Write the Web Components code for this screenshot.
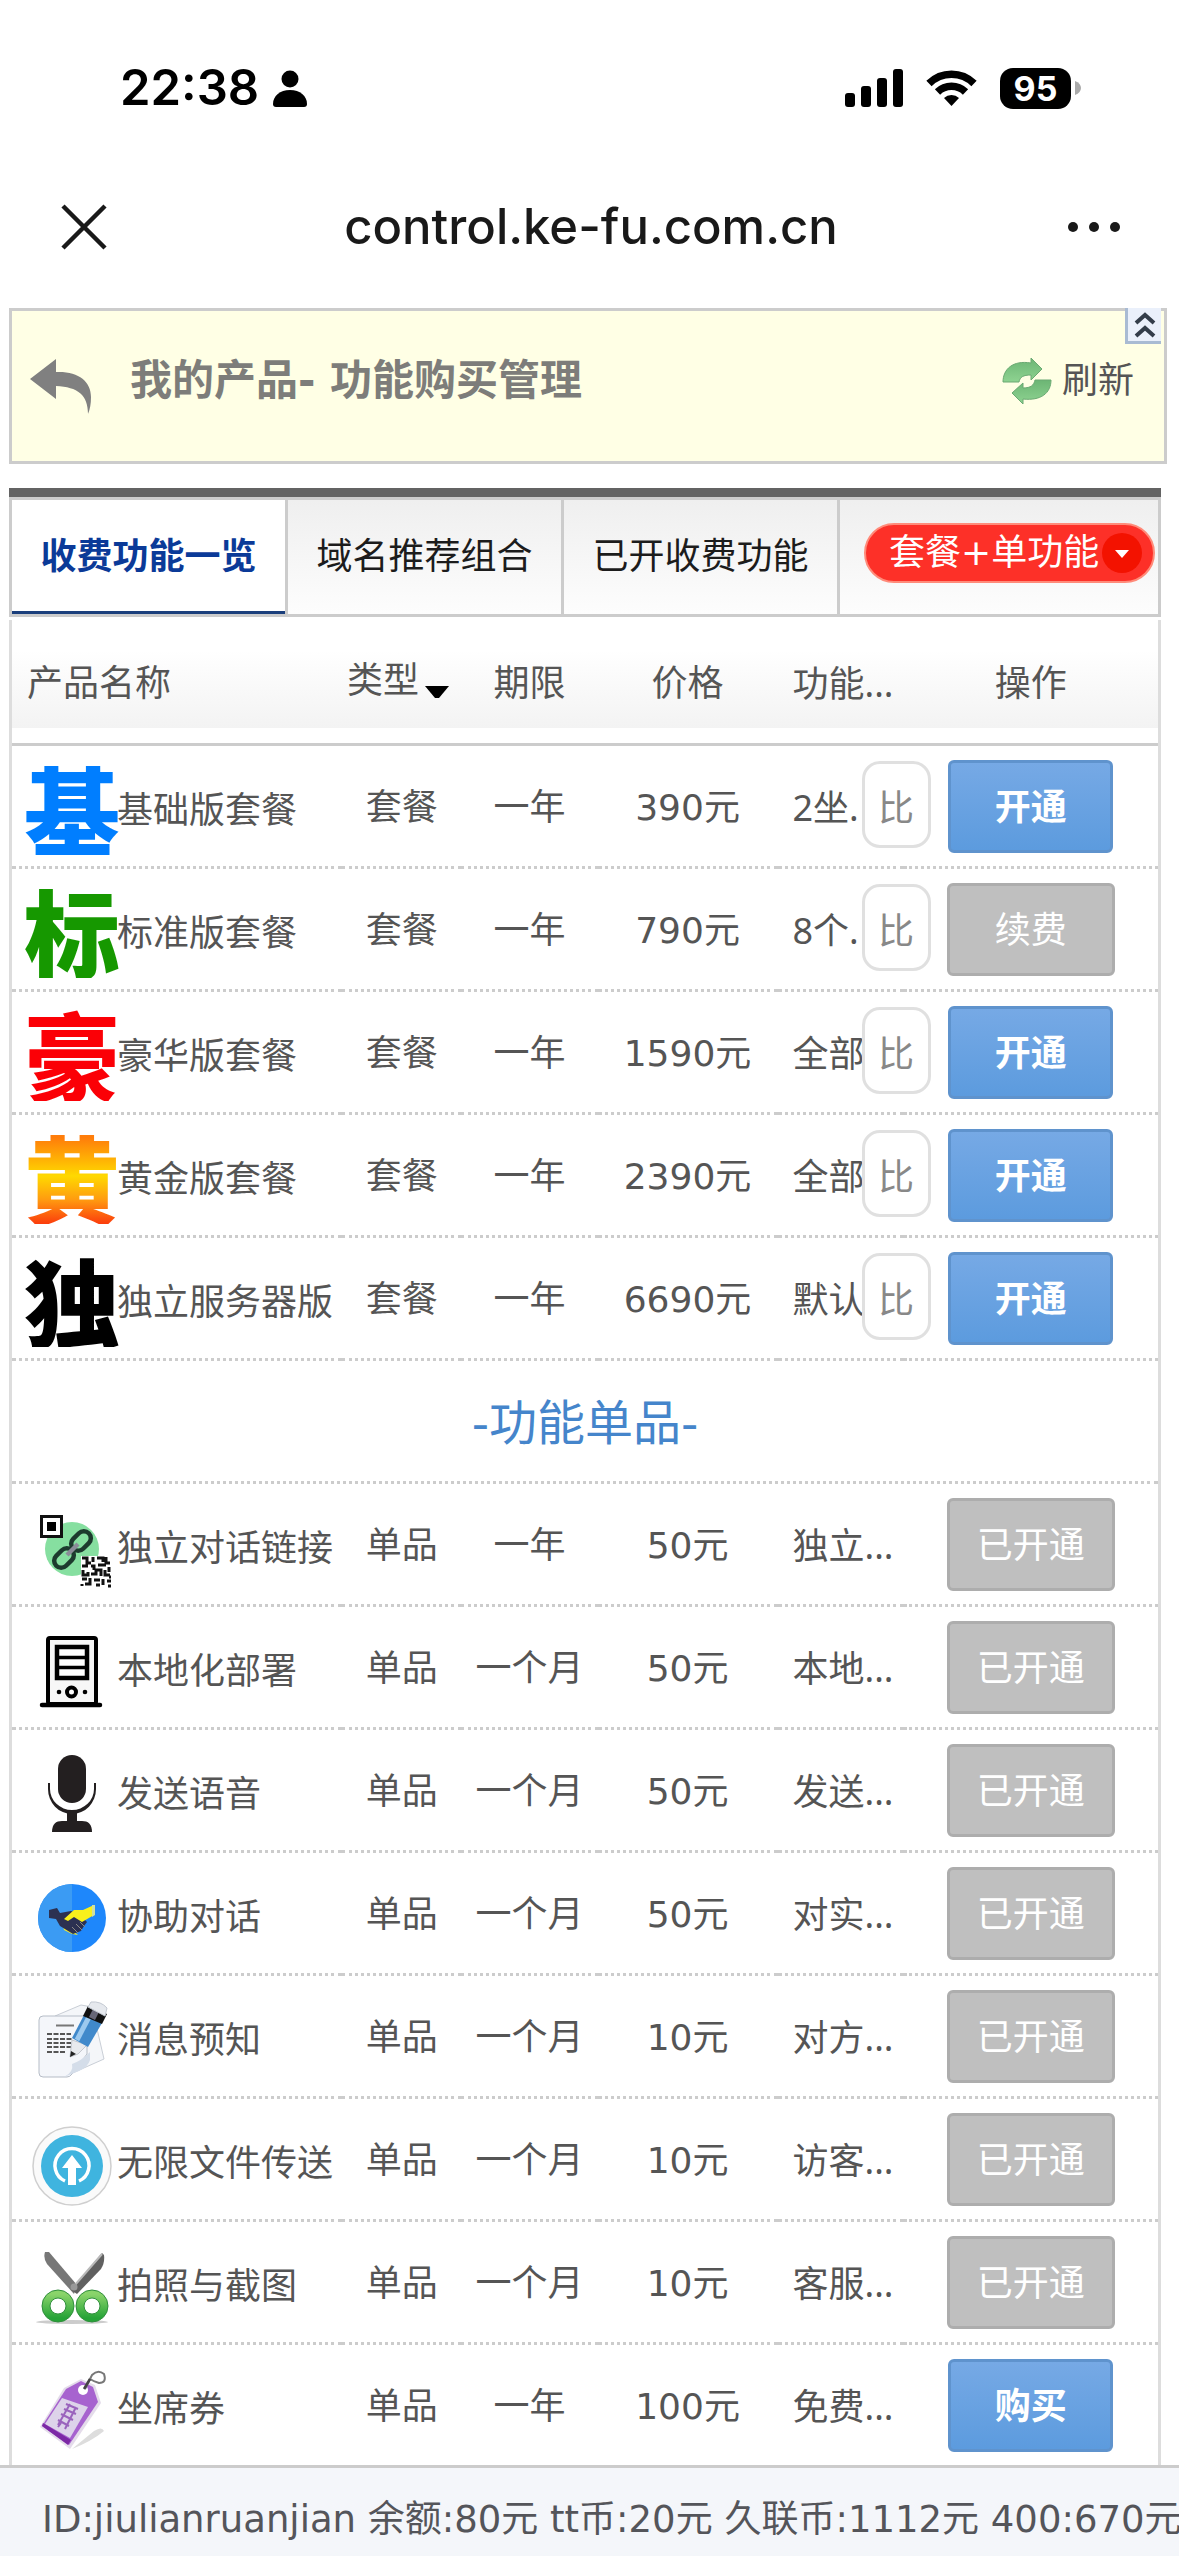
<!DOCTYPE html>
<html lang="zh-CN">
<head>
<meta charset="UTF-8">
<meta name="viewport" content="width=device-width, initial-scale=1">
<title>功能购买管理</title>
<style>
    body{
        margin: 0;
        background: #fff;
        color: #555;
        font-family: "DejaVu Sans", "Noto Sans CJK SC", sans-serif;
        font-size: 36px;
        line-height: 48px;
    }
</style>
</head>
<body>
<kf-app>
    <kf-status slot="top" hora="22:38" bateria="95"></kf-status>
    <kf-navbar slot="top">control.ke-fu.com.cn</kf-navbar>
    <kf-banner>我的产品- 功能购买管理</kf-banner>
    <kf-tabs></kf-tabs>
    <kf-products></kf-products>
    <kf-account slot="bottom">ID:jiulianruanjian 余额:80元 tt币:20元 久联币:1112元 400:670元</kf-account>
</kf-app>

<script>
// page frame: fixed head and foot, scrolling middle
class KF_app extends HTMLElement{
    constructor(){
        super();
        this.attachShadow({ mode: "open" });
    }
    connectedCallback(){
        this.shadowRoot.innerHTML = `
        <style>
        :host{
            display: flex;
            flex-direction: column;
            height: 100vh;
        }
        main{
            flex: 1;
            min-height: 0;
            overflow: hidden auto;
            scrollbar-width: none;
            padding: 8px 18px 0 9px;
        }
        </style>
        <slot name="top"></slot>
        <main><slot></slot></main>
        <slot name="bottom"></slot>
        `;
    }
}
window.customElements.define("kf-app", KF_app);

class KF_status extends HTMLElement{
    constructor(){
        super();
        this.hora;
        this.bateria;
        this.attachShadow({ mode: "open" });
    }
    static get observedAttributes(){
        return ['hora','bateria'];
    }
    attributeChangedCallback(nameAtr, oldValue, newValue){
        switch (nameAtr) {
            case "hora":
                this.hora = newValue;
                break;
            case "bateria":
                this.bateria = newValue;
                break;
        }
    }
    connectedCallback(){
        this.shadowRoot.innerHTML = `
        <style>
        :host{
            display: flex;
            align-items: center;
            justify-content: space-between;
            padding: 52px 98px 18px 120px;
            height: 72px;
            color: #000;
            font-family: Inter, sans-serif;
        }
        .group{
            display: flex;
            align-items: center;
        }
        .left{ gap: 14px; }
        .right{ gap: 23px; }
        .hora{
            font-size: 49px;
            font-weight: 600;
            line-height: 60px;
        }
        .bat{
            display: flex;
            align-items: center;
            gap: 4px;
        }
        .nivel{
            background: #000;
            color: #fff;
            border-radius: 13px;
            width: 71px;
            text-align: center;
            font-size: 34px;
            font-weight: 700;
            line-height: 41px;
        }
        svg{ display: block; }
        </style>
        <div class="group left">
            <span class="hora">${this.hora}</span>
            <svg width="34" height="37" viewBox="0 0 34 37"><circle cx="17" cy="9" r="8.5"/><path d="M0 34c0-8 7-14 17-14s17 6 17 14c0 2-1 3-3 3H3c-2 0-3-1-3-3z"/></svg>
        </div>
        <div class="group right">
            <svg width="58" height="38" viewBox="0 0 58 38"><rect y="24" width="10" height="14" rx="3"/><rect x="16" y="17" width="10" height="21" rx="3"/><rect x="32" y="9" width="10" height="29" rx="3"/><rect x="48" width="10" height="38" rx="3"/></svg>
            <svg width="51" height="38" viewBox="0 0 51 38" fill="none" stroke="#000" stroke-width="7.5"><path d="M3 14.5a32 32 0 0 1 45 0"/><path d="M11.500 23a20 20 0 0 1 28 0"/><path d="M25.500 37l-7.500-8a11 11 0 0 1 15 0z" fill="#000" stroke="none"/></svg>
            <div class="bat">
                <div class="nivel">${this.bateria}</div>
                <svg width="6" height="14" viewBox="0 0 6 14"><path d="M0 0c8 3 8 11 0 14z" fill="#aaa"/></svg>
            </div>
        </div>
        `;
    }
}
window.customElements.define("kf-status", KF_status);

class KF_navbar extends HTMLElement{
    constructor(){
        super();
        this.attachShadow({ mode: "open" });
    }
    connectedCallback(){
        this.shadowRoot.innerHTML = `
        <style>
        :host{
            display: grid;
            grid-template-columns: 1fr auto 1fr;
            align-items: center;
            box-sizing: border-box;
            height: 158px;
            padding: 36px 54px 24px 57px;
            color: #191919;
            font-family: Inter, sans-serif;
            font-size: 49px;
            line-height: 60px;
            font-weight: 500;
        }
        button{
            display: block;
            border: 0;
            padding: 4px;
            background: none;
        }
        button:last-child{ justify-self: end; }
        svg{ display: block; }
        </style>
        <button aria-label="关闭"><svg width="46" height="46" viewBox="0 0 46 46" stroke="#191919" stroke-width="4.500"><path d="M2 2l42 42M44 2L2 44"/></svg></button>
        <span><slot></slot></span>
        <button aria-label="更多"><svg width="54" height="12" viewBox="0 0 54 12" fill="#191919"><circle cx="6" cy="6" r="5"/><circle cx="27" cy="6" r="5"/><circle cx="48" cy="6" r="5"/></svg></button>
        `;
    }
}
window.customElements.define("kf-navbar", KF_navbar);

class KF_banner extends HTMLElement{
    constructor(){
        super();
        this.attachShadow({ mode: "open" });
    }
    connectedCallback(){
        this.shadowRoot.innerHTML = `
        <style>
        :host{
            display: flex;
            align-items: center;
            position: relative;
            box-sizing: border-box;
            height: 156px;
            margin-right: -6px;
            padding: 0 30px 10px 18px;
            border: 3px solid #ccc;
            background: #ffffe5;
        }
        .back{ margin-right: 38px; padding-top: 12px; }
        h1{
            margin: 0;
            flex: 1;
            font-size: 42px;
            color: #7d7d7a;
        }
        a{
            display: flex;
            align-items: center;
            gap: 10px;
            color: #555;
            text-decoration: none;
        }
        svg{ display: block; }
        .fold{
            position: absolute;
            top: -3px;
            right: 3px;
            width: 36px;
            height: 36px;
            padding: 0;
            border: 0 solid #a9bbd3;
            border-width: 0 0 3px 3px;
            background: #eaf0fb;
        }
        </style>
        <a class="back" href="#" aria-label="返回"><svg width="62" height="56" viewBox="0 0 62 56"><path fill="#808080" d="M0 20L26 0V13C48 12 61 22 61 38C61 45 60 50 58 55C58 36 48 28 26 27V40z"/></svg></a>
        <h1><slot></slot></h1>
        <a href="#"><svg width="50" height="48" viewBox="0 0 50 48">
            <defs><linearGradient id="g" x1="0" y1="0" x2="0" y2="1"><stop offset="0" stop-color="#6cb574"/><stop offset="1" stop-color="#8ed391"/></linearGradient></defs>
            <g fill="url(#g)" stroke="#6aa972" stroke-width="1">
                <path d="M1 25C1 12 11 3 29 6V1L40 12L29 23V18C21 18 18 20 17 25z"/>
                <path d="M49 23C49 36 39 44 21 42V47L10 36L21 26V31C29 31 32 28 33 23z"/>
            </g>
        </svg>刷新</a>
        <button class="fold" aria-label="收起"><svg width="33" height="33" viewBox="0 0 33 33" fill="none" stroke="#333d4a" stroke-width="4"><path d="M8 15l9-8 9 8M8 28l9-8 9 8"/></svg></button>
        `;
    }
}
window.customElements.define("kf-banner", KF_banner);

class KF_tabs extends HTMLElement{
    constructor(){
        super();
        this.attachShadow({ mode: "open" });
    }
    connectedCallback(){
        this.shadowRoot.innerHTML = `
        <style>
        :host{
            display: block;
            margin-top: 24px;
            border-top: 9px solid #636363;
        }
        nav{
            display: grid;
            grid-template-columns: 276fr 276fr 276fr 318fr;
            height: 114px;
            border: 3px solid #ccc;
            background: linear-gradient(#efefef, #fdfdfd);
        }
        a{
            display: flex;
            align-items: center;
            justify-content: center;
            border-right: 3px solid #ccc;
            color: #1c1c1c;
            text-decoration: none;
            white-space: nowrap;
        }
        a.on{
            background: #fff;
            color: #0b3a98;
            font-weight: 700;
            box-shadow: inset 0 -3px #1b3f7c;
        }
        .pill{
            display: flex;
            align-items: center;
            justify-content: space-between;
            margin: 23px 3px 31px 24px;
            padding: 0 10px 0 23px;
            border: 2px solid #ff8b7a;
            border-radius: 30px;
            background: #fd3028;
        }
        select{
            appearance: none;
            border: 0;
            padding: 0;
            background: none;
            color: #fff;
            font: inherit;
        }
        svg{ display: block; }
        </style>
        <nav>
            <a class="on" href="#">收费功能一览</a>
            <a href="#">域名推荐组合</a>
            <a href="#">已开收费功能</a>
            <label class="pill">
                <select aria-label="套餐类型"><option>套餐+单功能</option></select>
                <svg width="42" height="42" viewBox="0 0 42 42"><circle cx="21" cy="21" r="20" fill="#f31200"/><path d="M14 18h14l-7 8z" fill="#fff"/></svg>
            </label>
        </nav>
        `;
    }
}
window.customElements.define("kf-tabs", KF_tabs);

// icons are drawn on a 90x90 board
const ICONS = {
    link: `<circle cx="45" cy="45" r="27" fill="#86dfa0"/>
        <rect x="14.500" y="12.500" width="20" height="20" fill="#fff" stroke="#111" stroke-width="3"/><rect x="20" y="18" width="9" height="9"/>
        <g fill="none" stroke="#1d3a2e" stroke-width="4.500"><rect x="-11" y="-7" width="22" height="14" rx="7" transform="translate(54 37) rotate(-45)"/><rect x="-11" y="-7" width="22" height="14" rx="7" transform="translate(37 54) rotate(-45)"/></g>
        <path d="M40 51l11-11" stroke="#8b8b98" stroke-width="4.500"/>
        <rect x="54" y="52" width="30" height="30" fill="#fff"/>
        <path fill="none" stroke="#111" stroke-width="3" d="M55 54h5v5h4M66 53v5M70 54h6v4M79 53v6h4M55 62h6M64 62h3v4M71 61h8M82 63v5M56 66v5h5v-3M64 70h5v-4h5v6M78 66v5h5M55 75h5M63 74v6h-5M67 76h6M76 75v6M80 77h4M69 81h4M55 80v2M82 73h2M81 82h3"/>`,
    server: `<rect x="21" y="11" width="48" height="66" rx="2" fill="#f7f7f7" stroke="#000" stroke-width="4"/>
        <path d="M15 78h58" stroke="#000" stroke-width="4.500" stroke-linecap="round"/>
        <rect x="30" y="20" width="30" height="31" fill="#fff" stroke="#000" stroke-width="4.500"/><path d="M30 30.500h30M30 40.500h30" stroke="#000" stroke-width="3.500"/>
        <circle cx="44.500" cy="65" r="4.500" fill="#fff" stroke="#000" stroke-width="4"/><circle cx="32" cy="65" r="2.300"/><circle cx="58" cy="65" r="2.300"/>`,
    mic: `<g fill="#231f20"><rect x="31" y="5" width="28" height="48" rx="14"/>
        <path d="M21 33h2v6a22 21 0 0 0 44 0v-6h2v6a24 25 0 0 1-48 0z"/>
        <path d="M40 62h10v9h-10z"/><path d="M25 82c0-8 4-11 10-11h20c6 0 10 3 10 11z"/></g>`,
    hands: `<circle cx="45" cy="45" r="34" fill="#1e87fb"/><path d="M45 11a34 34 0 0 0 0 68z" fill="#3b9bf3"/>
        <path d="M36 53l8 3 7 6-6-1-8-4z" fill="#f6ec2a"/>
        <path d="M22 37l8-2 3 5 11-2 8 3 8 8-3 4-3 5-8 3-13-8-4-7-7-1z" fill="#2c3151"/>
        <path d="M45 54l6 6M49 51l6 6M53 49l5 5" stroke="#8e8a86"/>
        <path d="M37 46l10-9 9 0 11-5 0 10-12 7-8-5-6 4z" fill="#f9f01c"/><path d="M65 32l3 0 0 10-3 2z" fill="#cfe0a0"/>`,
    note: `<path d="M28 20l26-11 11 2 12 52-36 16z" fill="#f4f6f9" stroke="#c9ced6"/>
        <path d="M12 24q0-4 4-4h44v38L45 78q-2 3-5 3H16q-4 0-4-4z" fill="#f4f6fa" stroke="#b5bcc6"/>
        <path d="M37 81q10-5 8-13 9-3 18-12v8q-2 7-11 11z" fill="#d4dde9"/>
        <path d="M29 29.500h18" stroke="#777" stroke-width="2"/>
        <path d="M20 38h24M20 43h26M20 47h24M20 51h24M20 56h18" stroke="#555" stroke-width="2" stroke-dasharray="5 1.500"/>
        <path d="M43 61l2-17 15 5-9 9z" fill="#e8eaee" stroke="#c3c7ce"/><path d="M43 61l1-6 5 3z" fill="#222"/>
        <path d="M45 42l12-23 18 8-14 24z" fill="#4089cb"/><path d="M50 44l12-23" stroke="#9cc9ef" stroke-width="5"/>
        <path d="M56 20l5-10 19 8-5 10z" fill="#111"/><path d="M64 17l6 3" stroke="#667" stroke-width="9"/>
        <path d="M61 11l3-5q10-1 16 6l-2 8z" fill="#e6e9ee" stroke="#c3c9d2"/>`,
    upload: `<circle cx="45" cy="47" r="39" fill="#fafafa" stroke="#cfcfcf" stroke-width="1.500"/><circle cx="45" cy="47" r="31" fill="#3fb4df"/>
        <path d="M38 62a17 17 0 1 1 14 0" fill="none" stroke="#fff" stroke-width="3.500"/><path d="M45 36l10 13h-6v17h-8V49h-6z" fill="#fff"/>`,
    scissors: `<defs><linearGradient id="sg" x1="0" y1="0" x2="0" y2="1"><stop offset="0" stop-color="#8ad46b"/><stop offset="1" stop-color="#26a337"/></linearGradient></defs>
        <ellipse cx="45" cy="80" rx="36" ry="2" fill="#ccc"/>
        <path d="M18 10l4 0 28 33-3 9-27-30q-4-6-2-12z" fill="#777"/><path d="M75 11l2 2q1 8-3 14L50 52l-6-4z" fill="#606060"/><path d="M75 12L48 43" stroke="#b9b9b9" stroke-width="2"/>
        <circle cx="47" cy="45" r="3.500" fill="#999"/>
        <g fill="#fff" stroke="url(#sg)" stroke-width="8"><circle cx="31" cy="64" r="12"/><circle cx="65" cy="64" r="12"/></g>
        <g fill="none" stroke="#2f8f3c" stroke-width="1"><circle cx="31" cy="64" r="16"/><circle cx="65" cy="64" r="16"/><circle cx="31" cy="64" r="8"/><circle cx="65" cy="64" r="8"/></g>`,
    tag: `<path d="M45 84l22-18q8-5 10 0-12 10-32 18z" fill="#ddd"/>
        <path d="M54 14l14 6 6 18-31 46-30-22 24-39z" fill="#e4dcea"/>
        <path d="M54 16l12 6 5 15-29 43-27-19 24-37z" fill="#a763cf"/>
        <path d="M35 33l26 9-18 31-25-14z" fill="#ddd3ea"/><path d="M16 58l28 17-3 5-26-19z" fill="#7c29a5"/>
        <g fill="none" stroke="#9a63bd" stroke-width="2"><path d="M39 39l12 5M37 44l12 5M34 49l12 6M31 55l11 6M43 39l-12 21M49 42l-11 22M34 58l-3 4"/></g>
        <circle cx="56" cy="25" r="5" fill="#fff"/><path d="M58 24l7-14q6-6 12-1 3 9-5 9-6-2-9-4" fill="none" stroke="#777" stroke-width="2"/><path d="M57 24l6-10" stroke="#444" stroke-width="2.500"/>`
};

class KF_icon extends HTMLElement{
    constructor(){
        super();
        this.attachShadow({ mode: "open" });
    }
    connectedCallback(){
        let name = this.getAttribute("name");
        this.shadowRoot.innerHTML = `
        <style>
        :host{
            display: block;
            flex: none;
            width: 90px;
            height: 90px;
        }
        svg{ display: block; }
        </style>
        <svg width="90" height="90" viewBox="0 0 90 90" aria-hidden="true">${ICONS[name]}</svg>
        `;
    }
}
window.customElements.define("kf-icon", KF_icon);

// one heavy character used as the logo of a plan
class KF_mark extends HTMLElement{
    constructor(){
        super();
        this.attachShadow({ mode: "open" });
    }
    connectedCallback(){
        this.shadowRoot.innerHTML = `
        <style>
        :host{
            display: block;
            flex: none;
            width: 90px;
            height: 90px;
            font: 900 96px/96px "Noto Sans CJK SC", sans-serif;
        }
        span{
            display: block;
            margin: -7px -3px 0;
            background: ${this.getAttribute("fill")};
            background-clip: text;
            -webkit-background-clip: text;
            color: transparent;
        }
        </style>
        <span><slot></slot></span>
        `;
    }
}
window.customElements.define("kf-mark", KF_mark);

class KF_action extends HTMLElement{
    constructor(){
        super();
        this.attachShadow({ mode: "open" });
    }
    connectedCallback(){
        let off = this.hasAttribute("off");
        this.shadowRoot.innerHTML = `
        <style>
        :host{ display: inline-block; vertical-align: middle; }
        button{
            display: block;
            width: 165px;
            height: 93px;
            padding: 4px 0 0;
            border: 3px solid #5f93cd;
            border-radius: 6px;
            background: linear-gradient(#76a9e5, #5c9bde);
            color: #fff;
            font: inherit;
            font-weight: 700;
        }
        .off{
            width: 168px;
            border-color: #adadad;
            background: #bfbfbf;
            font-weight: 400;
        }
        </style>
        <button class="${off ? "off" : ""}"><slot></slot></button>
        `;
    }
}
window.customElements.define("kf-action", KF_action);

class KF_compare extends HTMLElement{
    constructor(){
        super();
        this.attachShadow({ mode: "open" });
    }
    connectedCallback(){
        this.shadowRoot.innerHTML = `
        <style>
        :host{ display: block; }
        button{
            display: block;
            width: 69px;
            height: 87px;
            padding: 0;
            border: 3px solid #e0e0e0;
            border-radius: 18px;
            background: #fff;
            color: #888;
            font: inherit;
        }
        </style>
        <button><slot></slot></button>
        `;
    }
}
window.customElements.define("kf-compare", KF_compare);

const PLANS = [
    ["基", "#007eff", "基础版套餐", "390元", "2坐.", "开通"],
    ["标", "#169800", "标准版套餐", "790元", "8个.", "续费"],
    ["豪", "#fb0006", "豪华版套餐", "1590元", "全部", "开通"],
    ["黄", "linear-gradient(#ff7d0a 10%, #ffd900 50%, #ff9a10 75%, #fb3c0c)", "黄金版套餐", "2390元", "全部", "开通"],
    ["独", "#000", "独立服务器版", "6690元", "默认", "开通"]
];
const ITEMS = [
    ["link", "独立对话链接", "一年", "50元", "独立...", "已开通"],
    ["server", "本地化部署", "一个月", "50元", "本地...", "已开通"],
    ["mic", "发送语音", "一个月", "50元", "发送...", "已开通"],
    ["hands", "协助对话", "一个月", "50元", "对实...", "已开通"],
    ["note", "消息预知", "一个月", "10元", "对方...", "已开通"],
    ["upload", "无限文件传送", "一个月", "10元", "访客...", "已开通"],
    ["scissors", "拍照与截图", "一个月", "10元", "客服...", "已开通"],
    ["tag", "坐席券", "一年", "100元", "免费...", "购买"]
];

class KF_products extends HTMLElement{
    constructor(){
        super();
        this.attachShadow({ mode: "open" });
    }
    row(icon, name, type, term, price, info, action, compare){
        let off = action == "续费" || action == "已开通" ? "off" : "";
        return `
        <tr>
            <td class="first"><div class="name">${icon}<span>${name}</span></div></td>
            <td>${type}</td>
            <td>${term}</td>
            <td>${price}</td>
            <td class="info">${info}${compare ? "<kf-compare>比</kf-compare>" : ""}</td>
            <td class="act"><kf-action ${off}>${action}</kf-action></td>
        </tr>`;
    }
    connectedCallback(){
        let plans = PLANS.map(p => this.row(`<kf-mark fill="${p[1]}">${p[0]}</kf-mark>`, p[2], "套餐", "一年", p[3], p[4], p[5], true)).join("");
        let items = ITEMS.map(p => this.row(`<kf-icon name="${p[0]}"></kf-icon>`, p[1], "单品", p[2], p[3], p[4], p[5], false)).join("");
        this.shadowRoot.innerHTML = `
        <style>
        :host{
            display: block;
            margin-top: 3px;
            border: 3px solid #ddd;
            border-width: 0 3px;
        }
        table{
            width: 100%;
            table-layout: fixed;
            border-spacing: 0;
        }
        th, td{
            box-sizing: border-box;
            height: 123px;
            padding: 4px 0 0;
            border-bottom: 3px dotted #ccc;
            font-weight: 400;
            text-align: center;
            white-space: nowrap;
        }
        td.first, td.act{ padding-top: 0; }
        th{
            height: 126px;
            border-bottom: 3px solid #ccc;
        }
        thead{
            background: linear-gradient(#fff 30px, #f3f3f3 108px, #fff 108px);
        }
        th:first-child{
            padding-left: 15px;
            text-align: left;
        }
        .info{
            position: relative;
            padding-left: 15px;
            text-align: left;
            font-family: "Noto Sans", "Noto Sans CJK SC", sans-serif;
        }
        .sort{
            display: flex;
            align-items: center;
            gap: 6px;
            padding: 0 0 6px 5px;
        }
        .sort svg{ padding-top: 22px; }
        .name{
            display: flex;
            align-items: center;
            padding: 10px 0 0 15px;
        }
        kf-compare{
            position: absolute;
            top: 15px;
            right: -27px;
            font-family: "Noto Sans CJK SC", sans-serif;
        }
        .title{
            color: #4585cb;
            font-size: 48px;
        }
        tr:last-child td{
            height: 120px;
            border-bottom: 0;
        }
        </style>
        <table>
            <colgroup>
                <col style="width: 28.8%"><col style="width: 10.4%"><col style="width: 11.9%"><col style="width: 15.7%"><col style="width: 11%"><col>
            </colgroup>
            <thead>
                <tr>
                    <th>产品名称</th>
                    <th><div class="sort">类型<svg width="24" height="12" viewBox="0 0 24 12"><path d="M0 0h24L14 12h-4z"/></svg></div></th>
                    <th>期限</th>
                    <th>价格</th>
                    <th class="info">功能...</th>
                    <th>操作</th>
                </tr>
            </thead>
            <tbody>
                ${plans}
                <tr><td class="title" colspan="6">-功能单品-</td></tr>
                ${items}
            </tbody>
        </table>
        `;
    }
}
window.customElements.define("kf-products", KF_products);

class KF_account extends HTMLElement{
    constructor(){
        super();
        this.attachShadow({ mode: "open" });
    }
    connectedCallback(){
        this.shadowRoot.innerHTML = `
        <style>
        :host{
            display: block;
            overflow: hidden;
            padding: 28px 0 12px 42px;
            border-top: 3px solid #ccc;
            background: #f4f6fa;
            color: #54555a;
            font-size: 37px;
            white-space: nowrap;
        }
        </style>
        <slot></slot>
        `;
    }
}
window.customElements.define("kf-account", KF_account);
</script>
</body>
</html>
